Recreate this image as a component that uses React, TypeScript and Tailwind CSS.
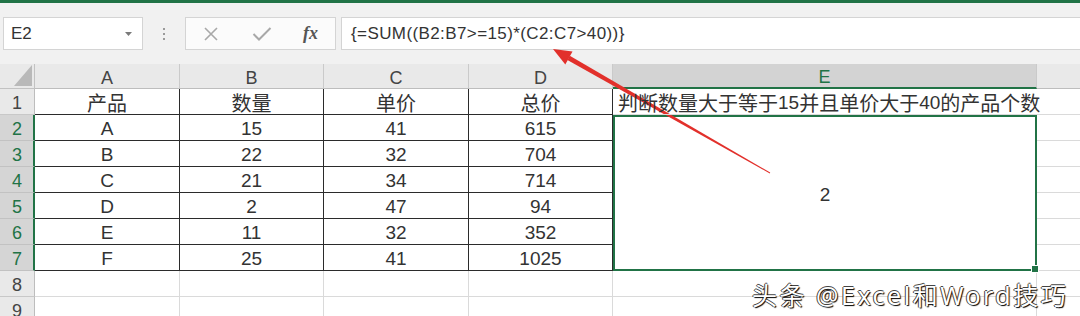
import React from "react";

const rows = [
  ["产品", "数量", "单价", "总价"],
  ["A", "15", "41", "615"],
  ["B", "22", "32", "704"],
  ["C", "21", "34", "714"],
  ["D", "2", "47", "94"],
  ["E", "11", "32", "352"],
  ["F", "25", "41", "1025"],
];

const cols = ["A", "B", "C", "D"];

// CJK runs are drawn a little larger than the latin text, as in the sheet
const Mixed = ({ text }: { text: string }) => (
  <>
    {text.split(/([\u4e00-\u9fff]+)/).map((part, i) =>
      /[\u4e00-\u9fff]/.test(part) ? (
        <span key={i} className="text-[20px]">
          {part}
        </span>
      ) : (
        <span key={i}>{part}</span>
      )
    )}
  </>
);

const App = () => {
  return (
    <div className="relative w-[1080px] h-[316px] overflow-hidden bg-white text-[#333] font-['Liberation_Sans','Noto_Sans_CJK_SC',sans-serif]">
      <div className="h-[3px] bg-[#217346]" />

      {/* formula bar */}
      <div className="h-[61px] bg-[#f1f1f1] flex items-start pt-[14px] pl-[3px]">
        <div className="w-[140px] h-[33px] bg-white border border-[#d4d4d4] flex items-center justify-between pl-[7px] pr-[10px]">
          <span className="text-[17px] text-[#333]">E2</span>
          <svg width="7" height="4" viewBox="0 0 7 4">
            <path d="M0 0h7L3.5 4z" fill="#7a7a7a" />
          </svg>
        </div>
        <div className="w-[42px] h-[33px] flex flex-col items-center justify-center gap-[3px]">
          <span className="w-[2px] h-[2px] bg-[#9a9a9a]" />
          <span className="w-[2px] h-[2px] bg-[#9a9a9a]" />
          <span className="w-[2px] h-[2px] bg-[#9a9a9a]" />
        </div>
        <div className="w-[151px] h-[33px] bg-[#fbfbfb] border border-[#d4d4d4] flex items-center">
          <div className="w-[48px] flex justify-center pl-[2px]">
            <svg width="16" height="16" viewBox="0 0 16 16">
              <path d="M2 2l12 12M14 2L2 14" stroke="#a8a8a8" strokeWidth="1.6" fill="none" />
            </svg>
          </div>
          <div className="w-[56px] flex justify-center">
            <svg width="20" height="14" viewBox="0 0 20 14">
              <path d="M1.5 7l5.5 5.5L18.5 1" stroke="#a8a8a8" strokeWidth="2" fill="none" />
            </svg>
          </div>
          <div className="flex-1 flex justify-center pr-[4px]">
            <span className="italic font-bold text-[18px] text-[#555] font-['Liberation_Serif',serif]">fx</span>
          </div>
        </div>
        <div className="flex-1 ml-[5px] h-[33px] bg-white border border-[#d4d4d4] border-r-0 flex items-center pl-[9px]">
          <span className="text-[17px] tracking-[0.4px] text-[#333]">{"{=SUM((B2:B7>=15)*(C2:C7>40))}"}</span>
        </div>
      </div>

      {/* sheet */}
      <div className="grid grid-cols-[35px_145px_144px_145px_144px_424px_43px] grid-rows-[25px_repeat(9,26px)]">
        <div className="bg-[#e9e9e9] border-r border-b border-[#c2c2c2] flex items-end justify-end pr-[2px] pb-[2px]">
          <svg width="18" height="21" viewBox="0 0 18 21">
            <path d="M18 0V21H0z" fill="#b9b9b9" />
          </svg>
        </div>
        {cols.map((c) => (
          <div
            key={c}
            className="bg-[#e9e9e9] border-r border-[#cacaca] border-b border-b-[#bdbdbd] flex items-center justify-center pt-[4px] text-[18px] text-[#444]"
          >
            {c}
          </div>
        ))}
        <div className="bg-[#d3d3d3] border-r border-[#cacaca] border-b-2 border-b-[#217346] flex items-center justify-center pt-[4px] text-[18px] text-[#217346]">
          E
        </div>
        <div className="bg-[#e9e9e9] border-b border-[#bdbdbd]" />

        {Array.from({ length: 9 }).map((_, r) => {
          const n = r + 1;
          const selected = n >= 2 && n <= 7;
          const data = rows[r];
          return (
            <React.Fragment key={n}>
              <div
                className={
                  selected
                    ? "bg-[#d5d5d5] border-r-2 border-r-[#217346] border-b border-b-[#c2c2c2] flex items-center justify-center pt-[4px] pl-[1px] text-[18px] text-[#217346]"
                    : "bg-[#e9e9e9] border-r border-r-[#bdbdbd] border-b border-b-[#c8c8c8] flex items-center justify-center pt-[4px] text-[18px] text-[#444]"
                }
              >
                {n}
              </div>
              {cols.map((c, ci) => (
                <div
                  key={c}
                  className={
                    data
                      ? "border-r border-b border-[#2b2b2b] flex items-center justify-center pt-[4px] text-[19px]"
                      : "border-r border-b border-[#dadada]"
                  }
                >
                  {data && <Mixed text={data[ci]} />}
                </div>
              ))}
              {n === 1 && (
                <div className="relative z-10 border-b border-[#dadada] flex items-center pt-[4px] pl-[5px] whitespace-nowrap text-[19px] overflow-visible">
                  <Mixed text="判断数量大于等于15并且单价大于40的产品个数" />
                </div>
              )}
              {n === 2 && (
                <div className="relative row-span-6 border-2 border-[#217346] bg-white flex items-center justify-center pt-[4px] text-[19px]">
                  2
                  <span className="absolute right-[-4px] bottom-[-4px] w-[6px] h-[6px] bg-[#217346] border border-white box-content" />
                </div>
              )}
              {(n === 8 || n === 9) && <div className="border-r border-b border-[#dadada]" />}
              <div className="border-b border-[#dadada]" />
            </React.Fragment>
          );
        })}
      </div>

      {/* red annotation arrow */}
      <svg className="absolute inset-0 pointer-events-none" width="1080" height="316" viewBox="0 0 1080 316">
        <polygon points="569.8,55.7 567.4,60.1 769.8,173.4 770.2,172.6" fill="#e2302b" />
        <polygon points="553,49 572.5,51.6 565.3,64.4" fill="#e2302b" />
      </svg>

      {/* watermark */}
      <div className="absolute left-[752px] top-[277px] text-[25px] tracking-[2.5px] text-white whitespace-nowrap font-['Noto_Sans','Noto_Sans_CJK_SC',sans-serif] [text-shadow:1px_1px_1px_#000,-1px_0_0_#444,0_-1px_0_#444]">
        头条 @Excel和Word技巧
      </div>
    </div>
  );
};

export default App;
